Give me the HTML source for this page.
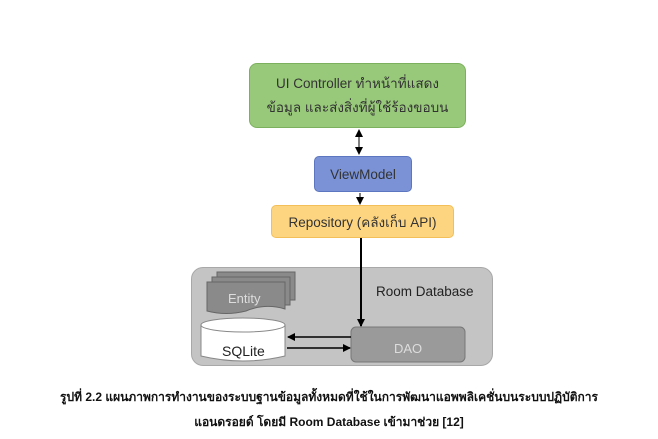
<!DOCTYPE html>
<html><head><meta charset="utf-8"><style>
body{margin:0;width:658px;height:439px;background:#fff;position:relative;overflow:hidden;font-family:"Liberation Sans","Noto Sans CJK SC",sans-serif}
.b{position:absolute;box-sizing:border-box;display:flex;align-items:center;justify-content:center;text-align:center;color:#333;font-size:13.5px}
.cap{position:absolute;left:0;width:658px;text-align:center;font-weight:bold;font-size:12px;color:#111;white-space:nowrap}
</style></head><body>
<div class="b" style="left:249px;top:63px;width:217px;height:65px;background:#98c97a;border:1px solid #7cb05e;border-radius:8px;line-height:24px;font-size:13.5px">UI Controller ทำหน้าที่แสดง<br>ข้อมูล และส่งสิ่งที่ผู้ใช้ร้องขอบน</div>
<div class="b" style="left:314px;top:156px;width:98px;height:36px;background:#7b93d6;border:1px solid #5c76bf;border-radius:5px">ViewModel</div>
<div class="b" style="left:271px;top:205px;width:183px;height:33px;background:#fdd581;border:1px solid #f2bf58;border-radius:5px">Repository (คลังเก็บ API)</div>
<div class="b" style="left:191px;top:267px;width:302px;height:99px;background:#c4c4c4;border:1px solid #a8a8a8;border-radius:12px"></div>
<div style="position:absolute;left:376px;top:284px;font-size:13.5px;color:#222">Room Database</div>
<svg style="position:absolute;left:0;top:0" width="658" height="439">
<defs><marker id="a" markerUnits="userSpaceOnUse" markerWidth="8" markerHeight="8" refX="7" refY="4" orient="auto-start-reverse"><path d="M0,0L8,4L0,8z" fill="#000"/></marker></defs>
<path d="M217,272H295V300H217z" fill="#8a8a8a" stroke="#666"/>
<path d="M212,277H290V305H212z" fill="#8a8a8a" stroke="#666"/>
<path d="M207,282H285V309Q265,303 246,311Q226,316 207,311z" fill="#8a8a8a" stroke="#666"/>
<text x="228" y="303" font-size="13" fill="#ddd" font-family="Liberation Sans">Entity</text>
<path d="M201,325V356Q243,366 285,356V325" fill="#fff" stroke="#888"/>
<ellipse cx="243" cy="325" rx="42" ry="7" fill="#fff" stroke="#888"/>
<text x="222" y="356" font-size="14" fill="#222" font-family="Liberation Sans">SQLite</text>
<rect x="351" y="327" width="114" height="35" rx="5" fill="#9a9a9a" stroke="#777"/>
<text x="394" y="353" font-size="13" fill="#ddd" font-family="Liberation Sans">DAO</text>
<line x1="359" y1="130" x2="359" y2="154" stroke="#000" marker-end="url(#a)" marker-start="url(#a)"/>
<line x1="360" y1="193" x2="360" y2="204" stroke="#000" marker-end="url(#a)"/>
<line x1="361" y1="238" x2="361" y2="326" stroke="#000" stroke-width="2" marker-end="url(#a)"/>
<line x1="351" y1="337" x2="288" y2="337" stroke="#000" stroke-width="1.5" marker-end="url(#a)"/>
<line x1="287" y1="348" x2="350" y2="348" stroke="#000" stroke-width="1.5" marker-end="url(#a)"/>
</svg>
<div class="cap" style="top:388px">รูปที่ 2.2 แผนภาพการทำงานของระบบฐานข้อมูลทั้งหมดที่ใช้ในการพัฒนาแอพพลิเคชั่นบนระบบปฏิบัติการ</div>
<div class="cap" style="top:413px">แอนดรอยด์ โดยมี Room Database เข้ามาช่วย [12]</div>
</body></html>
